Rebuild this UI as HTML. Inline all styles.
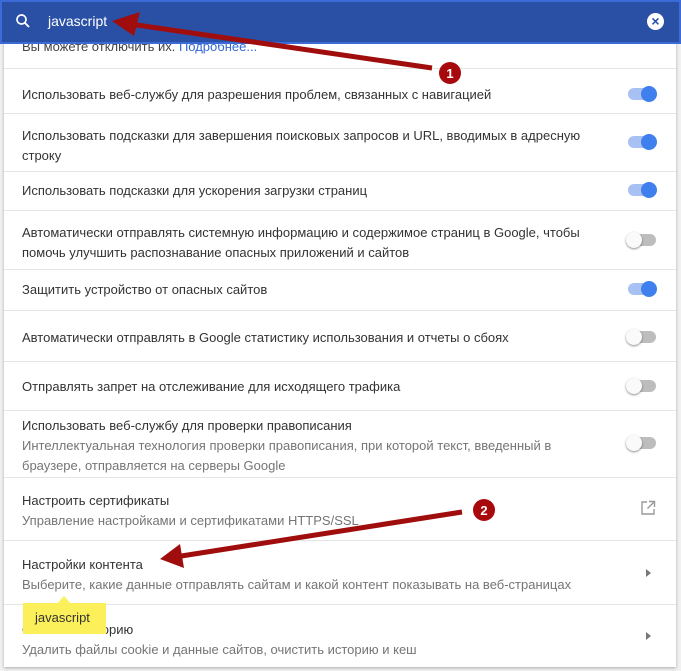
<!DOCTYPE html><html><head><style>
body{margin:0;width:681px;height:671px;background:#f1f1f1;font-family:"Liberation Sans",sans-serif;position:relative;overflow:hidden}
.card{position:absolute;left:4px;top:0;width:672px;height:667px;background:#fff;box-shadow:0 1px 3px rgba(0,0,0,.3)}
.hdr{position:absolute;left:0;top:0;width:681px;height:44px;background:#2a50a6;box-sizing:border-box;border:2px solid #3b6bd6}
.t{position:absolute;left:22px;font-size:13px;color:#333;white-space:nowrap}
.s{color:#757575}
.sep{position:absolute;left:4px;width:672px;height:1px;background:#e5e5e5}
.tg{position:absolute;left:628px;width:28px;height:12px;border-radius:6px}
.tg.on{background:#a7c1f3}.tg.off{background:#bdbdbd}
.tg i{position:absolute;top:-2px;width:16px;height:16px;border-radius:50%}
.on i{right:-1px;background:#3f80ee}
.off i{left:-2px;background:#fafafa;box-shadow:0 1px 2px rgba(0,0,0,.45)}
.ar{position:absolute;left:646px;width:0;height:0;border-top:4px solid transparent;border-bottom:4px solid transparent;border-left:5px solid #777}
</style></head><body>
<div class="card"></div>
<div class="t s" style="top:39px;color:#444">Вы можете отключить их. <span style="color:#3367d6">Подробнее...</span></div>
<div class="hdr"></div>
<svg style="position:absolute;left:14px;top:12px" width="18" height="18" viewBox="0 0 24 24"><circle cx="10" cy="10" r="6" fill="none" stroke="#fff" stroke-width="2.2"/><path d="M14.5 14.5L20 20" stroke="#fff" stroke-width="2.5"/></svg>
<div style="position:absolute;left:48px;top:13px;color:#fff;font-size:14px">javascript</div>
<div style="position:absolute;left:647px;top:13px;width:17px;height:17px;border-radius:50%;background:#fff;color:#2a50a6;font-size:14px;font-weight:bold;text-align:center;line-height:17px">×</div>

<div class="sep" style="top:68px"></div>
<div class="t" style="top:87px">Использовать веб-службу для разрешения проблем, связанных с навигацией</div>
<div class="tg on" style="top:88px"><i></i></div>
<div class="sep" style="top:113px"></div>
<div class="t" style="top:126px;line-height:20px">Использовать подсказки для завершения поисковых запросов и URL, вводимых в адресную<br>строку</div>
<div class="tg on" style="top:136px"><i></i></div>
<div class="sep" style="top:171px"></div>
<div class="t" style="top:183px">Использовать подсказки для ускорения загрузки страниц</div>
<div class="tg on" style="top:184px"><i></i></div>
<div class="sep" style="top:210px"></div>
<div class="t" style="top:223px;line-height:20px">Автоматически отправлять системную информацию и содержимое страниц в Google, чтобы<br>помочь улучшить распознавание опасных приложений и сайтов</div>
<div class="tg off" style="top:234px"><i></i></div>
<div class="sep" style="top:269px"></div>
<div class="t" style="top:282px">Защитить устройство от опасных сайтов</div>
<div class="tg on" style="top:283px"><i></i></div>
<div class="sep" style="top:310px"></div>
<div class="t" style="top:330px">Автоматически отправлять в Google статистику использования и отчеты о сбоях</div>
<div class="tg off" style="top:331px"><i></i></div>
<div class="sep" style="top:361px"></div>
<div class="t" style="top:379px">Отправлять запрет на отслеживание для исходящего трафика</div>
<div class="tg off" style="top:380px"><i></i></div>
<div class="sep" style="top:410px"></div>
<div class="t" style="top:416px;line-height:20px">Использовать веб-службу для проверки правописания<br><span class="s">Интеллектуальная технология проверки правописания, при которой текст, введенный в<br>браузере, отправляется на серверы Google</span></div>
<div class="tg off" style="top:437px"><i></i></div>
<div class="sep" style="top:477px"></div>
<div class="t" style="top:491px;line-height:20px">Настроить сертификаты<br><span class="s">Управление настройками и сертификатами HTTPS/SSL</span></div>
<svg style="position:absolute;left:640px;top:500px" width="16" height="16" viewBox="0 0 16 16"><path d="M7 2H2v12h12V9M9 1.5h5.5V7M14.5 1.5L7.5 8.5" fill="none" stroke="#999" stroke-width="1.4"/></svg>
<div class="sep" style="top:540px"></div>
<div class="t" style="top:555px;line-height:20px">Настройки контента<br><span class="s">Выберите, какие данные отправлять сайтам и какой контент показывать на веб-страницах</span></div>
<div class="ar" style="top:569px"></div>
<div class="sep" style="top:604px"></div>
<div class="t" style="top:620px;line-height:20px">Очистить историю<br><span class="s">Удалить файлы cookie и данные сайтов, очистить историю и кеш</span></div>
<div class="ar" style="top:632px"></div>
<div style="position:absolute;left:23px;top:603px;width:83px;height:31px;background:#fbef5a"></div>
<div style="position:absolute;left:57px;top:596px;width:0;height:0;border-left:7px solid transparent;border-right:7px solid transparent;border-bottom:8px solid #fbef5a"></div>
<div style="position:absolute;left:35px;top:610px;font-size:13px;color:#333">javascript</div>

<svg style="position:absolute;left:0;top:0" width="681" height="671">
<path d="M432 68 L130 24" stroke="#a00d0d" stroke-width="5"/>
<polygon points="112,21 140,12 134,36" fill="#a00d0d"/>
<circle cx="450" cy="73" r="11" fill="#a8090c"/>
<text x="450" y="78" font-family="Liberation Sans" font-weight="bold" font-size="13" fill="#fff" text-anchor="middle">1</text>
<path d="M462 512 L175 557" stroke="#a00d0d" stroke-width="5"/>
<polygon points="160,559 180,544 184,568" fill="#a00d0d"/>
<circle cx="484" cy="510" r="11" fill="#a8090c"/>
<text x="484" y="515" font-family="Liberation Sans" font-weight="bold" font-size="13" fill="#fff" text-anchor="middle">2</text>
</svg>
</body></html>
